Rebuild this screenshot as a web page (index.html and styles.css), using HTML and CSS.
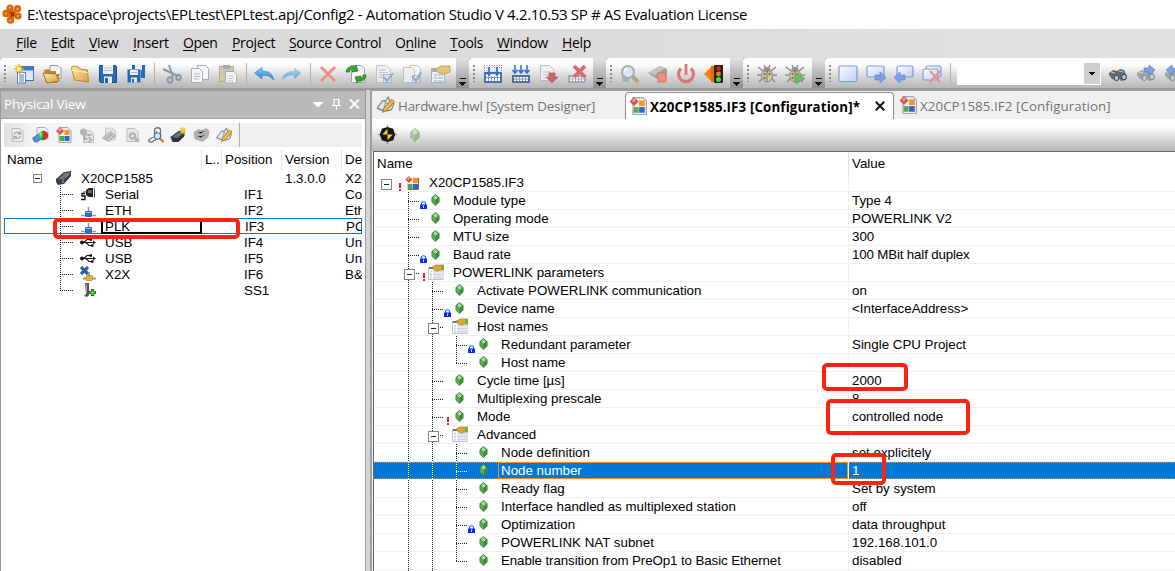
FILE: index.html
```html
<!DOCTYPE html>
<html lang="en">
<head>
<meta charset="utf-8">
<title>Automation Studio</title>
<link rel="stylesheet" href="styles.css">
</head>
<body>
<svg class="defs" width="0" height="0">
  <defs>
    <linearGradient id="gold" x1="0" y1="0" x2="1" y2="1"><stop offset="0" stop-color="#ffe9a6"/><stop offset="1" stop-color="#d9a246"/></linearGradient>
    <linearGradient id="sky" x1="0" y1="0" x2="0" y2="1"><stop offset="0" stop-color="#8ccdf2"/><stop offset="1" stop-color="#1f86d8"/></linearGradient>
    <linearGradient id="bubble" x1="0" y1="0" x2="1" y2="1"><stop offset="0" stop-color="#ffffff"/><stop offset="1" stop-color="#bccdf5"/></linearGradient>
    <radialGradient id="orb" cx=".35" cy=".35" r=".8"><stop offset="0" stop-color="#8f8"/><stop offset="1" stop-color="#0a7a1a"/></radialGradient>
  </defs>
  <symbol id="logo" viewBox="0 0 20 20"><g fill="#d9660c"><circle cx="8" cy="4" r="3.600"/><circle cx="15.500" cy="4.800" r="3.700"/><circle cx="4" cy="9.500" r="3.700"/><circle cx="16" cy="12" r="3.600"/><circle cx="8.500" cy="16" r="3.800"/><circle cx="10" cy="10" r="4"/></g><g fill="#f3a03c"><circle cx="8" cy="3.500" r="1.200"/><circle cx="15.500" cy="5" r="1.300"/><circle cx="3.700" cy="9.500" r="1.200"/><circle cx="16" cy="12" r="1.200"/><circle cx="8" cy="16.500" r="1.200"/></g><path d="M8 8l4 4M12 8l-3 5" stroke="#7a3105" stroke-width="1.200"/></symbol>
  <symbol id="new" viewBox="0 0 20 20"><rect x="5.500" y="2.500" width="14" height="14" fill="#dce8fb" stroke="#4a6fb5"/><rect x="6" y="3" width="13.500" height="3.500" fill="#3d74d8"/><rect x="3.500" y="8.500" width="8" height="10.500" fill="#fff" stroke="#5b7fc0"/><path d="M5 11h5M5 13h5M5 15h5M5 17h5" stroke="#4a78c8"/><path d="M5 0v10M0 5h10M1.500 1.500l7 7M8.500 1.500l-7 7" stroke="#f3b61c" stroke-width="1.500"/><circle cx="5" cy="5" r="2" fill="#fff09a"/></symbol>
  <symbol id="open" viewBox="0 0 20 20"><path d="M8 1.500h8l3 3v10H8z" fill="#f4f6fa" stroke="#8e9bb0"/><path d="M2 6l5-1 2 2 5 0v3l4 0-3 9H4z" fill="#c18a32"/><path d="M1 9l13 1 3 7-12 2z" fill="url(#gold)" stroke="#a8742a"/></symbol>
  <symbol id="folder" viewBox="0 0 20 20"><path d="M1.500 4l1-2 6 1 1 2 8 1 1 12-14-2z" fill="url(#gold)" stroke="#b98935"/><path d="M2 6.500l15.500 2" stroke="#fff3c2"/></symbol>
  <symbol id="save" viewBox="0 0 20 20"><path d="M1.500 1.500h16l1 1v16h-16l-1-1z" fill="#2868b8" stroke="#164d94"/><rect x="5" y="1" width="10" height="9" fill="#eef2f6"/><path d="M6 4h8M6 6.500h8" stroke="#b4bec8"/><rect x="6" y="12.500" width="8" height="6.500" fill="#e4eaf2"/><rect x="7" y="14" width="3" height="5" fill="#2d5e9e"/></symbol>
  <symbol id="saveall" viewBox="0 0 20 20"><path d="M6 1h13v13H6z" fill="#2868b8"/><rect x="9" y="1" width="7" height="5" fill="#eef2f6"/><path d="M1.500 5.500h13v13h-13z" fill="#2868b8" stroke="#7fa3d0"/><rect x="4" y="6" width="8" height="5" fill="#eef2f6"/><path d="M5 8.500h6" stroke="#aab6c4"/><rect x="5" y="13.500" width="6" height="5" fill="#e4eaf2"/><rect x="6" y="15" width="2" height="3.500" fill="#2d5e9e"/></symbol>
  <symbol id="cut" viewBox="0 0 20 20"><g fill="none" stroke="#8b98a6" stroke-width="2"><path d="M7 1l4 12M1 5l15 7"/><ellipse cx="8" cy="16" rx="2.500" ry="2.700"/><ellipse cx="16.500" cy="13.500" rx="2.300" ry="2.500"/></g></symbol>
  <symbol id="copy" viewBox="0 0 20 20"><g fill="#f5f7fa" stroke="#a3adb8"><path d="M7.500 1.500h8l3 3v11h-11z"/><path d="M1.500 4.500h8l3 3v11h-11z"/></g><path d="M4 10h6M4 12.500h6M4 15h5" stroke="#b0b9c4"/></symbol>
  <symbol id="paste" viewBox="0 0 20 20"><rect x="1.500" y="2.500" width="14" height="15" fill="#d5c8a8" stroke="#b7ab8c"/><rect x="5" y="1" width="7" height="4" fill="#a5abb2"/><path d="M7.500 7.500h8l3 3v8.500h-11z" fill="#f4f6f9" stroke="#a3adb8"/><path d="M9.500 12h6M9.500 14.500h6M9.500 17h6" stroke="#bcc4cd"/></symbol>
  <symbol id="undo" viewBox="0 0 20 20"><path d="M0.500 9L8 3.500v3.500c7 0 11 3 11.500 9-3-4-6-5-11.500-4.500V15z" fill="url(#sky)" stroke="#2c80c4" stroke-width=".6"/></symbol>
  <symbol id="redo" viewBox="0 0 20 20"><path d="M19.500 9L12 3.500v3.500C5 7 1 10 .5 16c3-4 6-5 11.500-4.500V15z" fill="url(#sky)" opacity=".65"/></symbol>
  <symbol id="del" viewBox="0 0 20 20"><path d="M3 3l14 14M17 3L3 17" stroke="#ec8d7c" stroke-width="2.600"/></symbol>
  <symbol id="build" viewBox="0 0 20 20"><path d="M5.500 1.500h10l3 3v14h-13z" fill="#f2f5f8" stroke="#9aa5b2"/><path d="M0 8c1-5 5-7 9-5l1-2 2 6-6 1 1-2c-2-1-3 0-3.500 2z" fill="#3aa52c" stroke="#17751b" stroke-width=".7"/><path d="M20 11c0 5-4 7-8 6l-1 2-2-6 6-1-1 2c2 0 3-1 3-3z" fill="#3aa52c" stroke="#17751b" stroke-width=".7"/></symbol>
  <symbol id="doccheck" viewBox="0 0 20 20"><path d="M2.500 1.500h10l4 4v13h-14z" fill="#eef0f2" stroke="#b8bdc2"/><path d="M5 6h7M5 8.500h9M5 11h6M5 13.500h4" stroke="#b6bcc2"/><rect x="9.500" y="10.500" width="8" height="8" fill="#dde6f0" stroke="#9db2c8"/><path d="M10 13l3 4 6-8" stroke="#76a2cb" stroke-width="2" fill="none"/></symbol>
  <symbol id="docscheck" viewBox="0 0 20 20"><path d="M7.500 1.500h8l3 3v12h-11z" fill="#f5f6f7" stroke="#b4babf"/><path d="M1.500 3.500h8l3 3v12h-11z" fill="#f1f3f5" stroke="#b4babf"/><rect x="10.500" y="11.500" width="7" height="7" fill="#dde6f0" stroke="#9db2c8"/><path d="M10 12l4 5 5-9" stroke="#76a2cb" stroke-width="2" fill="none"/></symbol>
  <symbol id="props" viewBox="0 0 20 20"><rect x="1.500" y="4.500" width="13" height="14" fill="#eef2f8" stroke="#a4afbd"/><rect x="2" y="5" width="12.500" height="3" fill="#9eb4d0"/><path d="M4 11h3M8 11h5M4 14h3M8 14h5M4 17h3M8 17h5" stroke="#9aa9bc"/><path d="M4 6l7-4 9 0v6l-6 2-5-1z" fill="#e3c377" stroke="#b48e45" stroke-width=".7"/></symbol>
  <symbol id="grid" viewBox="0 0 20 20"><path d="M1 8h18v11H1z" fill="#506e9e"/><path d="M3 10h14v7H3z" fill="#fff"/><path d="M5.500 12v5M8.500 12v5M11.500 12v5M14.500 12v5M3 13.500h14" stroke="#8297ba"/><path d="M1 1.500h18M1 3.500h18M1.500 1v7M18.500 1v7" stroke="#889" stroke-dasharray="1 1.500"/><path d="M6 3v8M3.500 8L6 11l2.500-3M14 3v8M11.500 8l2.500 3 2.500-3" stroke="#2e6ee0" stroke-width="1.800" fill="none"/></symbol>
  <symbol id="grid2" viewBox="0 0 20 20"><path d="M1 11h18v8H1z" fill="#506e9e"/><path d="M3 13h14v4H3z" fill="#fff"/><path d="M5.500 13v4M8.500 13v4M11.500 13v4M14.500 13v4M3 15h14" stroke="#8297ba"/><path d="M4 1v8M1.500 6L4 9l2.500-3M10 1v8M7.500 6L10 9l2.500-3M16 1v8M13.500 6L16 9l2.500-3" stroke="#2e6ee0" stroke-width="1.500" fill="none"/></symbol>
  <symbol id="docdown" viewBox="0 0 20 20"><path d="M1.500 1.500h9l4 4v11h-13z" fill="#f0f0f0" stroke="#b8bbbf"/><path d="M4 8h8M4 11h6M4 14h4" stroke="#b8bbbf"/><path d="M10 9h6v4h3l-6 6-6-6h3z" fill="#c9676a" stroke="#a65055" stroke-width=".6"/></symbol>
  <symbol id="gridx" viewBox="0 0 20 20"><path d="M1 11h18v8H1z" fill="#a2aab5"/><path d="M3 13h14v4H3z" fill="#fff"/><path d="M5.500 13v4M8.500 13v4M11.500 13v4M14.500 13v4M3 15h14" stroke="#a2aab5"/><path d="M7 2l11 11M18 2L7 13" stroke="#db686c" stroke-width="3.800"/></symbol>
  <symbol id="find" viewBox="0 0 20 20"><path d="M2 12h7v6H3z" fill="#a9adb1"/><path d="M12 12l6 6" stroke="#b9a37c" stroke-width="4"/><circle cx="8" cy="8" r="6" fill="#d8e6f3" stroke="#a3adb8" stroke-width="2"/><path d="M4.500 8c0-2 1-3.500 3-3.500" stroke="#fff" stroke-width="1.500" fill="none"/></symbol>
  <symbol id="modred" viewBox="0 0 20 20"><path d="M0 9L12 2l7 3v9l-6 3-9-5z" fill="#9da1a5"/><path d="M0 9L12 2l5 2-10 7z" fill="#bfc3c6"/><rect x="10" y="9" width="8" height="9" fill="#ef8f7e" stroke="#d07a6a"/></symbol>
  <symbol id="power" viewBox="0 0 20 20"><path d="M5 4.500a7.500 7.500 0 1 0 10 0" fill="none" stroke="#da777c" stroke-width="3.200"/><path d="M10 0v11" stroke="#da777c" stroke-width="2.800"/></symbol>
  <symbol id="light" viewBox="0 0 20 20"><path d="M0 10l9-9v18z" fill="#f08519"/><path d="M7 2h5v16H7z" fill="#e66c08"/><rect x="10" y="1" width="9" height="18" rx="1" fill="#2a1d18"/><circle cx="14.500" cy="4.500" r="2.400" fill="#b52a1f"/><circle cx="14.500" cy="10" r="2.400" fill="#d6891a"/><circle cx="14.500" cy="15.500" r="2.500" fill="#16f040"/></symbol>
  <symbol id="bug" viewBox="0 0 20 20"><path d="M1 3l5 4M19 3l-5 4M0 11h5M15 11h5M2 18l4-4M18 18l-4-4M7 1l2 4M13 1l-2 4" stroke="#8b8f93" stroke-width="1.500"/><ellipse cx="10" cy="11.500" rx="5.500" ry="6.500" fill="#d8c98a" stroke="#8b8e90"/><ellipse cx="10" cy="5.500" rx="3.500" ry="2.500" fill="#8d9399"/><path d="M10 6v12" stroke="#77797c"/><circle cx="7.500" cy="10" r="1.200" fill="#777"/><circle cx="12.500" cy="10" r="1.200" fill="#777"/><circle cx="7.500" cy="14" r="1.200" fill="#777"/></symbol>
  <symbol id="bubble0" viewBox="0 0 20 20"><rect x="1" y="2" width="18" height="15.500" rx="1.500" fill="url(#bubble)" stroke="#7d9ce0" stroke-width="1.200"/></symbol>
  <symbol id="bubbler" viewBox="0 0 20 20"><rect x="1" y="2" width="17" height="11" rx="2" fill="url(#bubble)" stroke="#7d9ce0" stroke-width="1.200"/><path d="M9 11h5V8l6 5.500-6 5.500v-3H9z" fill="#7f9fe6" stroke="#5f83cf" stroke-width=".7"/></symbol>
  <symbol id="bubblel" viewBox="0 0 20 20"><rect x="3" y="2" width="16" height="11" rx="2" fill="url(#bubble)" stroke="#7d9ce0" stroke-width="1.200"/><path d="M11 11H6V8l-6 5.500L6 19v-3h5z" fill="#7f9fe6" stroke="#5f83cf" stroke-width=".7"/></symbol>
  <symbol id="bubblex" viewBox="0 0 20 20"><rect x="4" y="2" width="15" height="11" rx="2" fill="url(#bubble)" stroke="#7d9ce0" stroke-width="1.200"/><rect x="1" y="5" width="15" height="11" rx="2" fill="url(#bubble)" stroke="#7d9ce0" stroke-width="1.200"/><path d="M8 7l10 11M18 7L8 18" stroke="#ec9182" stroke-width="2.200"/></symbol>
  <symbol id="bino" viewBox="0 0 20 20"><path d="M1 9l4-3 4 1 3-2 4 1 3 6-1 4-5 1-3-4-2 3-4-1-3-4z" fill="#66696d"/><path d="M3 8l4 1M11 7l4 1" stroke="#ccc"/><ellipse cx="8.500" cy="14" rx="2.300" ry="2.700" fill="#a4d0f2" stroke="#444"/><ellipse cx="16" cy="13" rx="2.300" ry="2.700" fill="#a4d0f2" stroke="#444"/></symbol>
  <symbol id="binor" viewBox="0 0 20 20"><g opacity=".5"><use href="#bino"/></g><path d="M8 4h5V1l6 5-6 5V8H8z" fill="#7f9fe2" stroke="#5f83cc" stroke-width=".7"/></symbol>
  <symbol id="binol" viewBox="0 0 20 20"><g opacity=".5"><use href="#bino"/></g><path d="M13 4H8V1L2 6l6 5V8h5z" fill="#7f9fe2" stroke="#5f83cc" stroke-width=".7"/></symbol>

  <symbol id="refresh" viewBox="0 0 16 16"><path d="M2.500 1.500h8l3 3v10h-11z" fill="#ececec" stroke="#bbb"/><path d="M4.500 7.500c1-3 5-3 6-1M11 4v3H8M11 9c-1 3-5 3-6 1M4.500 12.500v-3h3" fill="none" stroke="#aaa" stroke-width="1.300"/></symbol>
  <symbol id="online" viewBox="0 0 16 16"><path d="M4.500.5h8l3 3v8h-11z" fill="#eef2f8" stroke="#a7b3c4"/><path d="M0 11l6-4 4 4-5 4-3 0z" fill="#4b92d8" stroke="#215c9c" stroke-width=".6"/><circle cx="11" cy="8.500" r="4.700" fill="#dc2b20"/><path d="M11 3.800a4.700 4.700 0 0 0 0 9.400z" fill="url(#orb)"/></symbol>
  <symbol id="config" viewBox="0 0 16 16"><path d="M3.500 .5h9l3 3v12h-12z" fill="#e9eef5" stroke="#a0a8b4"/><path d="M4.500 0l4 4-4 4-4-4z" fill="#e2504e"/><path d="M4.500 1l1.500 1.500-1.500 2L2.500 3.500z" fill="#f5a4a0"/><rect x="9" y="3" width="5" height="5" fill="#fb9127"/><rect x="4" y="9" width="4.500" height="5" fill="#54ad43"/><rect x="9" y="9" width="5" height="5" fill="#3862c0"/></symbol>
  <symbol id="cubes" viewBox="0 0 16 16"><path d="M4.500 0l4 4-4 4-4-4z" fill="#e2504e"/><path d="M4.500 1l1.500 1.500-1.500 2L2.500 3.500z" fill="#f5a4a0"/><rect x="9" y="2" width="6" height="6" fill="#fb9127"/><rect x="3" y="9" width="5.500" height="6" fill="#54ad43"/><rect x="9" y="9" width="6" height="6" fill="#3862c0"/><path d="M3 15.500h12.500M15.500 2v13" stroke="#555"/></symbol>
  <symbol id="graydoc" viewBox="0 0 16 16"><path d="M5 3.500h7l3 3v9H5z" fill="#e3e3e3" stroke="#c2c2c2"/><circle cx="5" cy="5" r="3.600" fill="#b5b5b5"/><path d="M6 8v4h3M8 8h5M10 10l3 3-3 2" stroke="#a6a6a6" fill="none" stroke-width="1.500"/></symbol>
  <symbol id="graymod" viewBox="0 0 16 16"><path d="M4 1h7l3 3v9H4z" fill="#e5e5e5" stroke="#ccc"/><path d="M0 11l9-7 6 5-8 6z" fill="#b4b4b4"/><path d="M3 11l6-5M6 13l6-5" stroke="#ddd"/></symbol>
  <symbol id="graygear" viewBox="0 0 16 16"><path d="M2.500 1.500h8l3 3v10h-11z" fill="#e8e8e8" stroke="#bbb"/><circle cx="8" cy="9" r="2.600" fill="none" stroke="#b3b3b3" stroke-width="2.400"/><circle cx="12.500" cy="13" r="2.300" fill="#b3b3b3"/></symbol>
  <symbol id="search" viewBox="0 0 16 16"><path d="M7 9V3c0-3 6-3 6 0v7M9 8V4M6 10l-5 3c0 2 3 3 5 1l5-3" fill="none" stroke="#6c757d" stroke-width="1.300"/><path d="M12 11l4 4" stroke="#b57b2c" stroke-width="2.200"/><circle cx="10" cy="9" r="3.300" fill="#cfe4f7" stroke="#3a5f8c"/></symbol>
  <symbol id="module" viewBox="0 0 16 16"><path d="M0 9l8-7 7-1v5l-7 8-6 1-2-3z" fill="#3a4047"/><path d="M2 9l7-6 5-1-7 7z" fill="#737b85"/><path d="M7 9v4M8.500 8.500l5-5" stroke="#99a1aa"/></symbol>
  <symbol id="modnew" viewBox="0 0 16 16"><path d="M0 10l8-6 6 1v4l-6 6-6 0z" fill="#2e343b"/><path d="M2 10l6-5 5 1-6 5z" fill="#68717b"/><path d="M12.500 0v7M9 3.500h7M10 1l5 5M15 1l-5 5" stroke="#f5c832" stroke-width="1.200"/></symbol>
  <symbol id="graychip" viewBox="0 0 16 16"><path d="M0 5l5-3 3 1 5-2 3 3-1 6-6 5-8-3z" fill="#b0b0b0"/><path d="M3 6l4 1 6-3M3 10l4 1 6-3" stroke="#c4c4c4"/></symbol>
  <symbol id="design" viewBox="0 0 16 16"><path d="M0 11L5 4h3l2-3 2 5 3 1-2 5-3 1-4 0z" fill="#e2e6ea" stroke="#6d8294"/><path d="M5 4l8 5M8 4l-2 8" stroke="#93a5b5"/><path d="M5 14.500l1-3.500 7-8 2.500 2-7 8z" fill="#f2bb31" stroke="#8a691d" stroke-width=".7"/></symbol>

  <symbol id="serial" viewBox="0 0 16 16"><path d="M6 4l3-2h4v9H9l-3-2z" fill="#222"/><path d="M3 6h3M14.500 2.500v9" stroke="#555"/><path d="M5 7.500H2v2.500h3v3.500H1" stroke="#111" fill="none" stroke-width="1.300"/><path d="M9 4v3M11 4v3" stroke="#aaa"/></symbol>
  <symbol id="net" viewBox="0 0 16 16"><path d="M8.500 5v4M1 13.500h15" stroke="#9a9a9a" stroke-width="1.600"/><rect x="5" y="9" width="7" height="6" rx="1" fill="#2e6fc0"/><path d="M6 10.500h5" stroke="#8fc0f2"/></symbol>
  <symbol id="usb" viewBox="0 0 16 16"><g stroke="#111" fill="none" stroke-width="1.100"><path d="M1 8.500h14M4 8.500l3-3h4M6 8.500l3 3h3"/></g><circle cx="2" cy="8.500" r="2" fill="#111"/><path d="M13 6.500l3 2-3 2z" fill="#111"/><rect x="9.500" y="4.300" width="2.500" height="2.500" fill="#111"/><rect x="11" y="10.300" width="2.500" height="2.500" fill="#111"/></symbol>
  <symbol id="x2x" viewBox="0 0 16 16"><path d="M1 1l7 7M8 1L1 8" stroke="#2e5f9c" stroke-width="3.200"/><path d="M9 6v4M3 12.500h13" stroke="#999" stroke-width="1.800"/><rect x="6" y="9.500" width="6.500" height="5" rx="1" fill="#efb322" stroke="#a67710" stroke-width=".6"/></symbol>
  <symbol id="slot" viewBox="0 0 16 16"><path d="M5 1h4v12l-2 2-3-1 2-2z" fill="#555"/><path d="M6.500 2v9" stroke="#aaa"/><path d="M12.500 7v7M9 10.500h7" stroke="#167018" stroke-width="3.200"/><path d="M12.500 8v5M10 10.500h5" stroke="#5ad24b" stroke-width="1.600"/></symbol>

  <symbol id="gem" viewBox="0 0 8 12"><path d="M4 0l4 3.500v4.500l-4 4-4-4V3.500z" fill="#3c8a38"/><path d="M4 .7l2.500 3L4 6 1.500 3.700z" fill="#a5d89b"/><path d="M.8 4.200L4 6.500V11L.8 8z" fill="#62aa58"/></symbol>
  <symbol id="lock" viewBox="0 0 7 8"><path d="M1.500 4V2.200C1.500.2 5.500.2 5.500 2.200V4" fill="none" stroke="#1668ee" stroke-width="1.100"/><rect x="0" y="3.500" width="7" height="4.500" fill="#0d2af0"/><path d="M3.500 4.500v2.500" stroke="#d6e2ff"/></symbol>
  <symbol id="bang" viewBox="0 0 4 8"><path d="M1 0h2v5H1zM1 6h2v2H1z" fill="#f0122c"/></symbol>
  <symbol id="sheet" viewBox="0 0 16 16"><rect x=".5" y="3.500" width="14.500" height="12" fill="#fff" stroke="#b9c3d2"/><path d="M2 7.500h12M2 10.500h12M2 13.500h12" stroke="#ccd4e2" stroke-width="2"/><path d="M4.500 6v9" stroke="#fff"/><rect x="1" y="3" width="4" height="2" fill="#777"/><path d="M4 3l4-2h5l3 0v5l-4 0-3 1-4-2z" fill="#dfa62f" stroke="#9b7228" stroke-width=".6"/><path d="M13 1h2.500v5l-2-1z" fill="#5ab436"/></symbol>
  <symbol id="target" viewBox="0 0 20 20"><path d="M10 0v20M0 10h20" stroke="#999" stroke-width="1.400"/><path d="M10 2l6 2 2 6-2 6-6 2-6-2-2-6 2-6z" fill="#161616"/><path d="M10 4v6H4.500zM10 10h5.500L10 16z" fill="#f4cf22"/></symbol>
</svg>

<div class="titlebar">
  <svg class="i20"><use href="#logo"/></svg>
  <span class="title">E:\testspace\projects\EPLtest\EPLtest.apj/Config2 - Automation Studio V 4.2.10.53 SP # AS Evaluation License</span>
</div>

<nav class="menu">
  <span class="m-file"><u>F</u>ile</span><span class="m-edit"><u>E</u>dit</span><span class="m-view"><u>V</u>iew</span><span class="m-insert"><u>I</u>nsert</span><span class="m-open"><u>O</u>pen</span><span class="m-project"><u>P</u>roject</span><span class="m-source"><u>S</u>ource Control</span><span class="m-online">O<u>n</u>line</span><span class="m-tools"><u>T</u>ools</span><span class="m-window"><u>W</u>indow</span><span><u>H</u>elp</span>
</nav>

<div class="toolbar">
  <div class="group g1"><i class="grip"></i>
    <svg><use href="#new"/></svg><svg><use href="#open"/></svg><svg><use href="#folder"/></svg><svg><use href="#save"/></svg><svg><use href="#saveall"/></svg><i class="sep"></i>
    <svg><use href="#cut"/></svg><svg><use href="#copy"/></svg><svg><use href="#paste"/></svg><i class="sep"></i>
    <svg><use href="#undo"/></svg><svg><use href="#redo"/></svg><i class="sep"></i>
    <svg><use href="#del"/></svg><svg><use href="#build"/></svg><svg class="dim"><use href="#doccheck"/></svg><svg class="dim"><use href="#docscheck"/></svg><svg><use href="#props"/></svg>
    <b class="more"></b></div>
  <div class="group g2"><i class="grip"></i>
    <svg><use href="#grid"/></svg><svg><use href="#grid2"/></svg><svg><use href="#docdown"/></svg><svg><use href="#gridx"/></svg>
    <b class="more"></b></div>
  <div class="group g3"><i class="grip"></i>
    <svg><use href="#find"/></svg><svg><use href="#modred"/></svg><svg><use href="#power"/></svg><svg><use href="#light"/></svg>
    <b class="more"></b></div>
  <div class="group g4"><i class="grip"></i>
    <svg><use href="#bug"/></svg><svg><use href="#bug"/><path class="play" d="M15 9l9 5.500-9 5.500z"/></svg>
    <b class="more"></b></div>
  <div class="group g5"><i class="grip"></i>
    <svg><use href="#bubble0"/></svg><svg><use href="#bubbler"/></svg><svg><use href="#bubblel"/></svg><svg><use href="#bubblex"/></svg><i class="sep"></i>
    <div class="combo"><b></b></div>
    <svg><use href="#bino"/></svg><svg><use href="#binor"/></svg><svg><use href="#binol"/></svg></div>
</div>

<main class="work">
  <section class="physical">
    <header class="caption"><span>Physical View</span>
      <svg class="capicons" viewBox="0 0 46 14"><path d="M0 5h11L5.500 10.500z"/><path d="M21.500 2.500h5v6h-5zM19.500 8.500h9M24 9v4M26 2v6" class="line"/><path d="M37.500 2.500l9 9M46.500 2.500l-9 9" class="cross"/></svg>
    </header>
    <div class="pbody">
      <div class="ptools"><svg><use href="#refresh"/></svg><svg><use href="#online"/></svg><svg><use href="#config"/></svg><svg><use href="#graydoc"/></svg><svg><use href="#graymod"/></svg><svg><use href="#graygear"/></svg><svg><use href="#search"/></svg><svg><use href="#modnew"/></svg><svg><use href="#graychip"/></svg><svg><use href="#design"/></svg></div>
      <div class="phead"><span>Name</span><span>L..</span><span>Position</span><span>Version</span><span>De</span></div>
      <div class="prow root"><div class="pname"><i class="box"></i><svg><use href="#module"/></svg><span>X20CP1585</span></div><span class="pos"></span><span class="ver">1.3.0.0</span><span class="des">X20</span></div>
      <div class="prow"><div class="pname"><i class="tee"></i><svg><use href="#serial"/></svg><span>Serial</span></div><span class="pos">IF1</span><span class="ver"></span><span class="des">Co</span></div>
      <div class="prow"><div class="pname"><i class="tee"></i><svg><use href="#net"/></svg><span>ETH</span></div><span class="pos">IF2</span><span class="ver"></span><span class="des">Eth</span></div>
      <div class="prow current"><div class="pname"><i class="tee"></i><svg><use href="#net"/></svg><span class="edit">PLK</span></div><span class="pos">IF3</span><span class="ver"></span><span class="des">PO</span></div>
      <div class="prow"><div class="pname"><i class="tee"></i><svg><use href="#usb"/></svg><span>USB</span></div><span class="pos">IF4</span><span class="ver"></span><span class="des">Un</span></div>
      <div class="prow"><div class="pname"><i class="tee"></i><svg><use href="#usb"/></svg><span>USB</span></div><span class="pos">IF5</span><span class="ver"></span><span class="des">Un</span></div>
      <div class="prow"><div class="pname"><i class="tee"></i><svg><use href="#x2x"/></svg><span>X2X</span></div><span class="pos">IF6</span><span class="ver"></span><span class="des">B&amp;</span></div>
      <div class="prow"><div class="pname"><i class="tee end"></i><svg><use href="#slot"/></svg><span></span></div><span class="pos">SS1</span><span class="ver"></span><span class="des"></span></div>
    </div>
  </section>

  <section class="editor">
    <div class="tabs">
      <div class="tab t1"><svg><use href="#design"/></svg><span>Hardware.hwl [System Designer]</span></div>
      <div class="tab t2"><svg><use href="#config"/></svg><span>X20CP1585.IF3 [Configuration]*</span><svg class="close" viewBox="0 0 10 10"><path d="M.8 .8l8.400 8.400M9.200 .8L.8 9.200"/></svg></div>
      <div class="tab t3"><svg><use href="#config"/></svg><span>X20CP1585.IF2 [Configuration]</span></div>
    </div>
    <div class="etools"><svg class="i20"><use href="#target"/></svg><svg class="gemoff"><use href="#gem"/></svg></div>
    <div class="tree">
      <div class="thead"><span>Name</span><span>Value</span></div>
      <div class="row root"><div class="name"><i class="first"></i><b class="ic"><svg class="bang"><use href="#bang"/></svg><svg class="cubes"><use href="#cubes"/></svg></b>X20CP1585.IF3</div><div class="val"></div></div>
      <div class="row"><div class="name"><i class="t"></i><b class="ic"><svg class="lock"><use href="#lock"/></svg><svg class="gem"><use href="#gem"/></svg></b>Module type</div><div class="val">Type 4</div></div>
      <div class="row"><div class="name"><i class="t"></i><b class="ic"><svg class="gem"><use href="#gem"/></svg></b>Operating mode</div><div class="val">POWERLINK V2</div></div>
      <div class="row"><div class="name"><i class="t"></i><b class="ic"><svg class="gem"><use href="#gem"/></svg></b>MTU size</div><div class="val">300</div></div>
      <div class="row"><div class="name"><i class="t"></i><b class="ic"><svg class="lock"><use href="#lock"/></svg><svg class="gem"><use href="#gem"/></svg></b>Baud rate</div><div class="val tight">100 MBit half duplex</div></div>
      <div class="row"><div class="name"><i class="t x"></i><b class="ic"><svg class="bang"><use href="#bang"/></svg><svg class="sheet"><use href="#sheet"/></svg></b>POWERLINK parameters</div><div class="val"></div></div>
      <div class="row"><div class="name"><i class="v"></i><i class="t"></i><b class="ic"><svg class="gem"><use href="#gem"/></svg></b>Activate POWERLINK communication</div><div class="val">on</div></div>
      <div class="row"><div class="name"><i class="v"></i><i class="t"></i><b class="ic"><svg class="lock"><use href="#lock"/></svg><svg class="gem"><use href="#gem"/></svg></b>Device name</div><div class="val">&lt;InterfaceAddress&gt;</div></div>
      <div class="row"><div class="name"><i class="v"></i><i class="t x"></i><b class="ic"><svg class="sheet"><use href="#sheet"/></svg></b>Host names</div><div class="val"></div></div>
      <div class="row"><div class="name"><i class="v"></i><i class="v"></i><i class="t"></i><b class="ic"><svg class="lock"><use href="#lock"/></svg><svg class="gem"><use href="#gem"/></svg></b>Redundant parameter</div><div class="val">Single CPU Project</div></div>
      <div class="row"><div class="name"><i class="v"></i><i class="v"></i><i class="t end"></i><b class="ic"><svg class="gem"><use href="#gem"/></svg></b>Host name</div><div class="val"></div></div>
      <div class="row"><div class="name"><i class="v"></i><i class="t"></i><b class="ic"><svg class="gem"><use href="#gem"/></svg></b>Cycle time [µs]</div><div class="val">2000</div></div>
      <div class="row"><div class="name"><i class="v"></i><i class="t"></i><b class="ic"><svg class="gem"><use href="#gem"/></svg></b>Multiplexing prescale</div><div class="val">8</div></div>
      <div class="row"><div class="name"><i class="v"></i><i class="t"></i><b class="ic"><svg class="bang"><use href="#bang"/></svg><svg class="gem"><use href="#gem"/></svg></b>Mode</div><div class="val">controlled node</div></div>
      <div class="row"><div class="name"><i class="v"></i><i class="t x"></i><b class="ic"><svg class="sheet"><use href="#sheet"/></svg></b>Advanced</div><div class="val"></div></div>
      <div class="row"><div class="name"><i class="v"></i><i class="v"></i><i class="t"></i><b class="ic"><svg class="gem"><use href="#gem"/></svg></b>Node definition</div><div class="val">set explicitely</div></div>
      <div class="row selected"><div class="name"><i class="v"></i><i class="v"></i><i class="t"></i><b class="ic"><svg class="gem"><use href="#gem"/></svg></b><span class="cell">Node number</span></div><div class="val">1</div></div>
      <div class="row"><div class="name"><i class="v"></i><i class="v"></i><i class="t"></i><b class="ic"><svg class="gem"><use href="#gem"/></svg></b>Ready flag</div><div class="val">Set by system</div></div>
      <div class="row"><div class="name"><i class="v"></i><i class="v"></i><i class="t"></i><b class="ic"><svg class="gem"><use href="#gem"/></svg></b>Interface handled as multiplexed station</div><div class="val">off</div></div>
      <div class="row"><div class="name"><i class="v"></i><i class="v"></i><i class="t"></i><b class="ic"><svg class="lock"><use href="#lock"/></svg><svg class="gem"><use href="#gem"/></svg></b>Optimization</div><div class="val">data throughput</div></div>
      <div class="row"><div class="name"><i class="v"></i><i class="v"></i><i class="t"></i><b class="ic"><svg class="gem"><use href="#gem"/></svg></b>POWERLINK NAT subnet</div><div class="val">192.168.101.0</div></div>
      <div class="row"><div class="name tight"><i class="v"></i><i class="v"></i><i class="t end"></i><b class="ic"><svg class="gem"><use href="#gem"/></svg></b>Enable transition from PreOp1 to Basic Ethernet</div><div class="val">disabled</div></div>
      <div class="row"><div class="name"><i class="v"></i><i class="v"></i></div><div class="val"></div></div>
    </div>
  </section>
</main>

<div class="mark mark-plk"></div>
<div class="mark mark-cycle"></div>
<div class="mark mark-mode"></div>
<div class="mark mark-node"></div>
</body>
</html>
```
FILE: styles.css
```css
* { box-sizing: border-box; }
body {
  margin: 0;
  width: 1175px;
  height: 571px;
  overflow: hidden;
  position: relative;
  background: #d4d4d4;
  color: #000;
  font: 13.33px "Liberation Sans", Arial, sans-serif;
  white-space: nowrap;
}
.defs { position: absolute; }
.i20 { width: 20px; height: 20px; flex: none; }

/* title and menu */
.titlebar {
  height: 29px;
  display: flex;
  align-items: center;
  gap: 5px;
  padding: 0 0 2px 2px;
  background: #fff;
}
.title { font: 15px/20px "Open Sans", sans-serif; letter-spacing: -0.34px; }
.menu {
  height: 29px;
  display: flex;
  align-items: center;
  padding: 0 0 1px 16px;
  background: linear-gradient(90deg, #d8d8d8, #e2e2e2);
  font: 14px/20px "Open Sans", sans-serif;
  letter-spacing: -0.35px;
}
.menu span { flex: none; }
.menu u { text-underline-offset: 2px; }
.m-file { width: 35px; }
.m-edit { width: 38px; }
.m-view { width: 44px; }
.m-insert { width: 50px; }
.m-open { width: 49px; }
.m-project { width: 57px; }
.m-source { width: 106px; }
.m-online { width: 55px; }
.m-tools { width: 47px; }
.m-window { width: 65px; }

/* main toolbar */
.toolbar {
  height: 32px;
  display: flex;
  background: #c8c8c8;
  border-bottom: 2px solid #9b9b9b;
}
.group {
  flex: none;
  height: 30px;
  display: flex;
  align-items: center;
  border-radius: 4px 3px 0 4px;
  background: linear-gradient(#fff 0, #fafafa 25%, #d8d8d8 60%, #b6b6b6 100%);
}
.group svg { width: 28px; height: 20px; flex: none; margin-top: 1px; }
.group .dim { opacity: .8; }
.play { fill: #6cbc64; stroke: #4a9d50; stroke-width: .6; }
.grip {
  width: 3px;
  height: 17px;
  margin: 0 3px 0 4px;
  flex: none;
  background: repeating-linear-gradient(#8c8c8c 0 2px, transparent 2px 4px);
  background-size: 2px 100%;
  background-repeat: no-repeat;
}
.sep { width: 8px; height: 21px; flex: none; background: linear-gradient(#b0b0b0, #b0b0b0) 4px 0 / 1px 100% no-repeat; }
.g1 { width: 469px; }
.g2, .g3 { width: 137px; }
.g4 { width: 82px; }
.g5 { flex: 1 0 350px; }
.g5 .grip { margin-right: 2px; }
.more {
  width: 13px;
  height: 30px;
  margin-left: auto;
  flex: none;
  border-radius: 0 4px 0 0;
  background:
    linear-gradient(#111, #111) 4px 20px / 6px 1px no-repeat,
    conic-gradient(from 315deg at 50% 100%, #111 90deg, transparent 0) 3px 23px / 7px 4px no-repeat,
    linear-gradient(#e3e3e3, #8f8f8f);
}
.combo { width: 144px; height: 22px; margin: 2px 3px 0 3px; background: #fff; display: flex; justify-content: flex-end; padding-right: 1px; flex: none; }
.combo b {
  width: 16px;
  height: 21px;
  background: linear-gradient(135deg, transparent 50%, #111 50%) 5px 9px / 0 0 no-repeat, linear-gradient(#111, #111) 5px 9px / 6px 1px no-repeat, linear-gradient(#111, #111) 6px 10px / 4px 1px no-repeat, linear-gradient(#111, #111) 7px 11px / 2px 1px no-repeat, #cfcfcf;
}
.more {
  background:
    linear-gradient(#111, #111) 4px 20px / 6px 1px no-repeat,
    linear-gradient(#111, #111) 3px 24px / 7px 1px no-repeat,
    linear-gradient(#111, #111) 4px 25px / 5px 1px no-repeat,
    linear-gradient(#111, #111) 5px 26px / 3px 1px no-repeat,
    linear-gradient(#111, #111) 6px 27px / 1px 1px no-repeat,
    linear-gradient(#e3e3e3, #8f8f8f);
}

/* work area */
.work { height: 481px; display: flex; }
.physical { width: 366px; border: 1px solid #9b9b9b; border-bottom: 0; flex: none; overflow: hidden; background: #fff; }
.caption {
  height: 28px;
  display: flex;
  align-items: center;
  justify-content: space-between;
  padding: 0 6px 1px 3px;
  background: #bababa;
  border-bottom: 1px solid #a0a0a0;
  color: #fff;
  font: 13.5px/20px "Open Sans", sans-serif;
  letter-spacing: -.15px;
}
.capicons { width: 47px; height: 14px; fill: #fff; overflow: visible; }
.capicons .line { fill: none; stroke: #fff; stroke-width: 1.2; }
.capicons .cross { fill: none; stroke: #fff; stroke-width: 1.8; }
.pbody { height: 453px; padding: 4px 3px 0; overflow: hidden; background: #fff; }
.ptools {
  height: 24px;
  display: flex;
  align-items: center;
  padding-left: 2px;
  background: linear-gradient(90deg, #e2e2e2 0, #f4f4f4 30px, #f4f4f4 235px, #b0b0b0 235px, #b0b0b0 236px, #f0f0f0 236px);
}
.ptools svg { width: 23px; height: 16px; flex: none; }
.phead { height: 23px; padding-top: 3px; display: flex; line-height: 19px; overflow: hidden; }
.phead span { flex: none; padding-left: 3px; border-right: 1px solid #e3e3e3; }
.phead span:nth-child(1) { width: 198px; }
.phead span:nth-child(2) { width: 20px; }
.phead span:nth-child(3) { width: 60px; }
.phead span:nth-child(4) { width: 60px; }
.phead span:nth-child(5) { border: 0; }
.prow { height: 16px; display: flex; line-height: 18px; overflow: hidden; border: 0 solid #0078d7; }
.pname { width: 197px; height: 16px; display: flex; flex: none; padding-left: 56px; }
.pname svg { width: 16px; height: 16px; flex: none; margin: 0 9px 0 7px; }
.root .pname { padding-left: 29px; }
.root .pname svg { margin: 0 9px 0 14px; }
.pos { width: 84px; padding-left: 43px; flex: none; }
.ver { width: 60px; flex: none; }
.des { flex: none; }
.box {
  width: 9px;
  height: 9px;
  margin-top: 4px;
  flex: none;
  border: 1px solid #848484;
  background: linear-gradient(#222, #222) center / 5px 1px no-repeat, #fff;
}
.tee {
  width: 13px;
  flex: none;
  background:
    repeating-linear-gradient(#222 0 1px, transparent 1px 2px) 0 0 / 1px 100% no-repeat,
    repeating-linear-gradient(90deg, #222 0 1px, transparent 1px 2px) 0 8px / 100% 1px no-repeat;
}
.tee.end { background-size: 1px 9px, 100% 1px; }
.current { background: linear-gradient(#0078d7, #0078d7) 0 0 / 100% 1px no-repeat, linear-gradient(#0078d7, #0078d7) 0 100% / 100% 1px no-repeat; border-width: 0 1px; }
.current .pname { padding-left: 55px; width: 197px; }
.edit { flex: 1; border: solid #000; border-width: 0 2px 2px; padding-left: 2px; margin-left: -4px; line-height: 18px; }

/* editor */
.editor { flex: 1; margin-left: 4px; border-left: 2px solid #a0a0a0; border-top: 1px solid #9b9b9b; display: flex; flex-direction: column; background: #f0f0f0; }
.tabs { height: 28px; display: flex; flex: none; font: 13.33px/20px "Open Sans", sans-serif; }
.tab { display: flex; align-items: center; color: #727272; flex: none; }
.tab span { padding-top: 2px; }
.tab svg { width: 18px; height: 18px; margin-right: 3px; flex: none; }
.t1 { width: 253px; padding-left: 5px; letter-spacing: -.18px; }
.t2 { width: 269px; height: 27px; margin-top: 1px; padding: 0 8px 0 3px; background: #fff; border: 1px solid #8c8c8c; border-bottom: 0; border-radius: 4px 4px 0 0; color: #000; font-weight: bold; letter-spacing: .13px; }
.t3 { padding-left: 5px; letter-spacing: .07px; }
.tab .close { width: 10px; height: 10px; margin: 0 0 0 auto; stroke: #111; stroke-width: 2; }
.etools {
  height: 32px;
  flex: none;
  display: flex;
  align-items: center;
  gap: 13px;
  padding: 0 0 1px 6px;
  background: linear-gradient(#fff 0, #fbfbfb 28%, #d8d8d8 62%, #b8b8b8 100%);
}
.etools .i20 { width: 19px; height: 19px; }
.gemoff { width: 10px; height: 14px; opacity: .45; }
.tree { flex: 1; overflow: hidden; margin-left: 1px; border-left: 1px solid #666; border-top: 1px solid #666; background: #fff; }
.thead { height: 22px; display: flex; line-height: 24px; }
.thead span:first-child { width: 475px; padding-left: 3px; border-right: 1px solid #e3e3e3; }
.thead span:last-child { padding-left: 3px; }
.row { height: 18px; display: flex; line-height: 17px; border-bottom: 1px solid #f0f0f4; }
.name { width: 475px; height: 18px; display: flex; padding-left: 22px; border-right: 1px solid #eef0f6; flex: none; }
.val { flex: 1; padding-left: 3px; }
.tight { letter-spacing: -.1px; }
.val.tight { letter-spacing: -.16px; }
.name i {
  --ink: #222;
  width: 24px;
  height: 18px;
  flex: none;
  position: relative;
  --vert: repeating-linear-gradient(var(--ink) 0 1px, transparent 1px 2px);
  --horz: repeating-linear-gradient(90deg, var(--ink) 0 1px, transparent 1px 2px);
}
.name .v { background: var(--vert) 12px 0 / 1px 18px no-repeat; }
.name .t { background: var(--vert) 12px 0 / 1px 18px no-repeat, var(--horz) 12px 9px / 12px 1px no-repeat; }
.name .end { background: var(--vert) 12px 0 / 1px 10px no-repeat, var(--horz) 12px 9px / 12px 1px no-repeat; }
.name .x::after, .name .first::after {
  content: "";
  position: absolute;
  left: 8px;
  top: 5px;
  width: 9px;
  height: 9px;
  border: 1px solid #848484;
  background: linear-gradient(#222, #222) center / 5px 1px no-repeat, #fff;
}
.root .name { padding-left: 0; }
.name .first { width: 22px; }
.name .first::after { left: 7px; top: 5px; }
.ic { width: 33px; height: 18px; position: relative; flex: none; }
.ic svg { position: absolute; }
.ic .gem { left: 11px; top: 2px; width: 9px; height: 12px; }
.ic .lock { left: 0; top: 9px; width: 7px; height: 8px; }
.ic .bang { left: 2px; top: 9px; width: 4px; height: 8px; }
.ic .sheet { left: 8px; top: 0; width: 16px; height: 16px; }
.ic .cubes { left: 9px; top: 2px; width: 14px; height: 14px; }
.selected { color: #fff; background: #0078d7; border-bottom-color: #fff; }
.selected .name, .selected .val { height: 17px; background: repeating-linear-gradient(90deg, #f08a30 0 1px, transparent 1px 2px) 0 0 / 100% 1px no-repeat, repeating-linear-gradient(90deg, #f08a30 0 1px, transparent 1px 2px) 0 16px / 100% 1px no-repeat; }
.selected .name { border-right-color: #fff; }
.selected .name i { --ink: #fff; height: 17px; }
.cell { flex: 1; margin: 0 0 0 -3px; padding-left: 2px; border: 1px solid #f08a30; line-height: 15px; }

/* red highlight frames */
.mark { position: absolute; border: 4px solid #fb2314; border-radius: 5px; }
.mark-plk { left: 53px; top: 218px; width: 187px; height: 21px; }
.mark-cycle { left: 822px; top: 363px; width: 86px; height: 28px; }
.mark-mode { left: 826px; top: 399px; width: 144px; height: 36px; }
.mark-node { left: 831px; top: 453px; width: 55px; height: 32px; }
```
